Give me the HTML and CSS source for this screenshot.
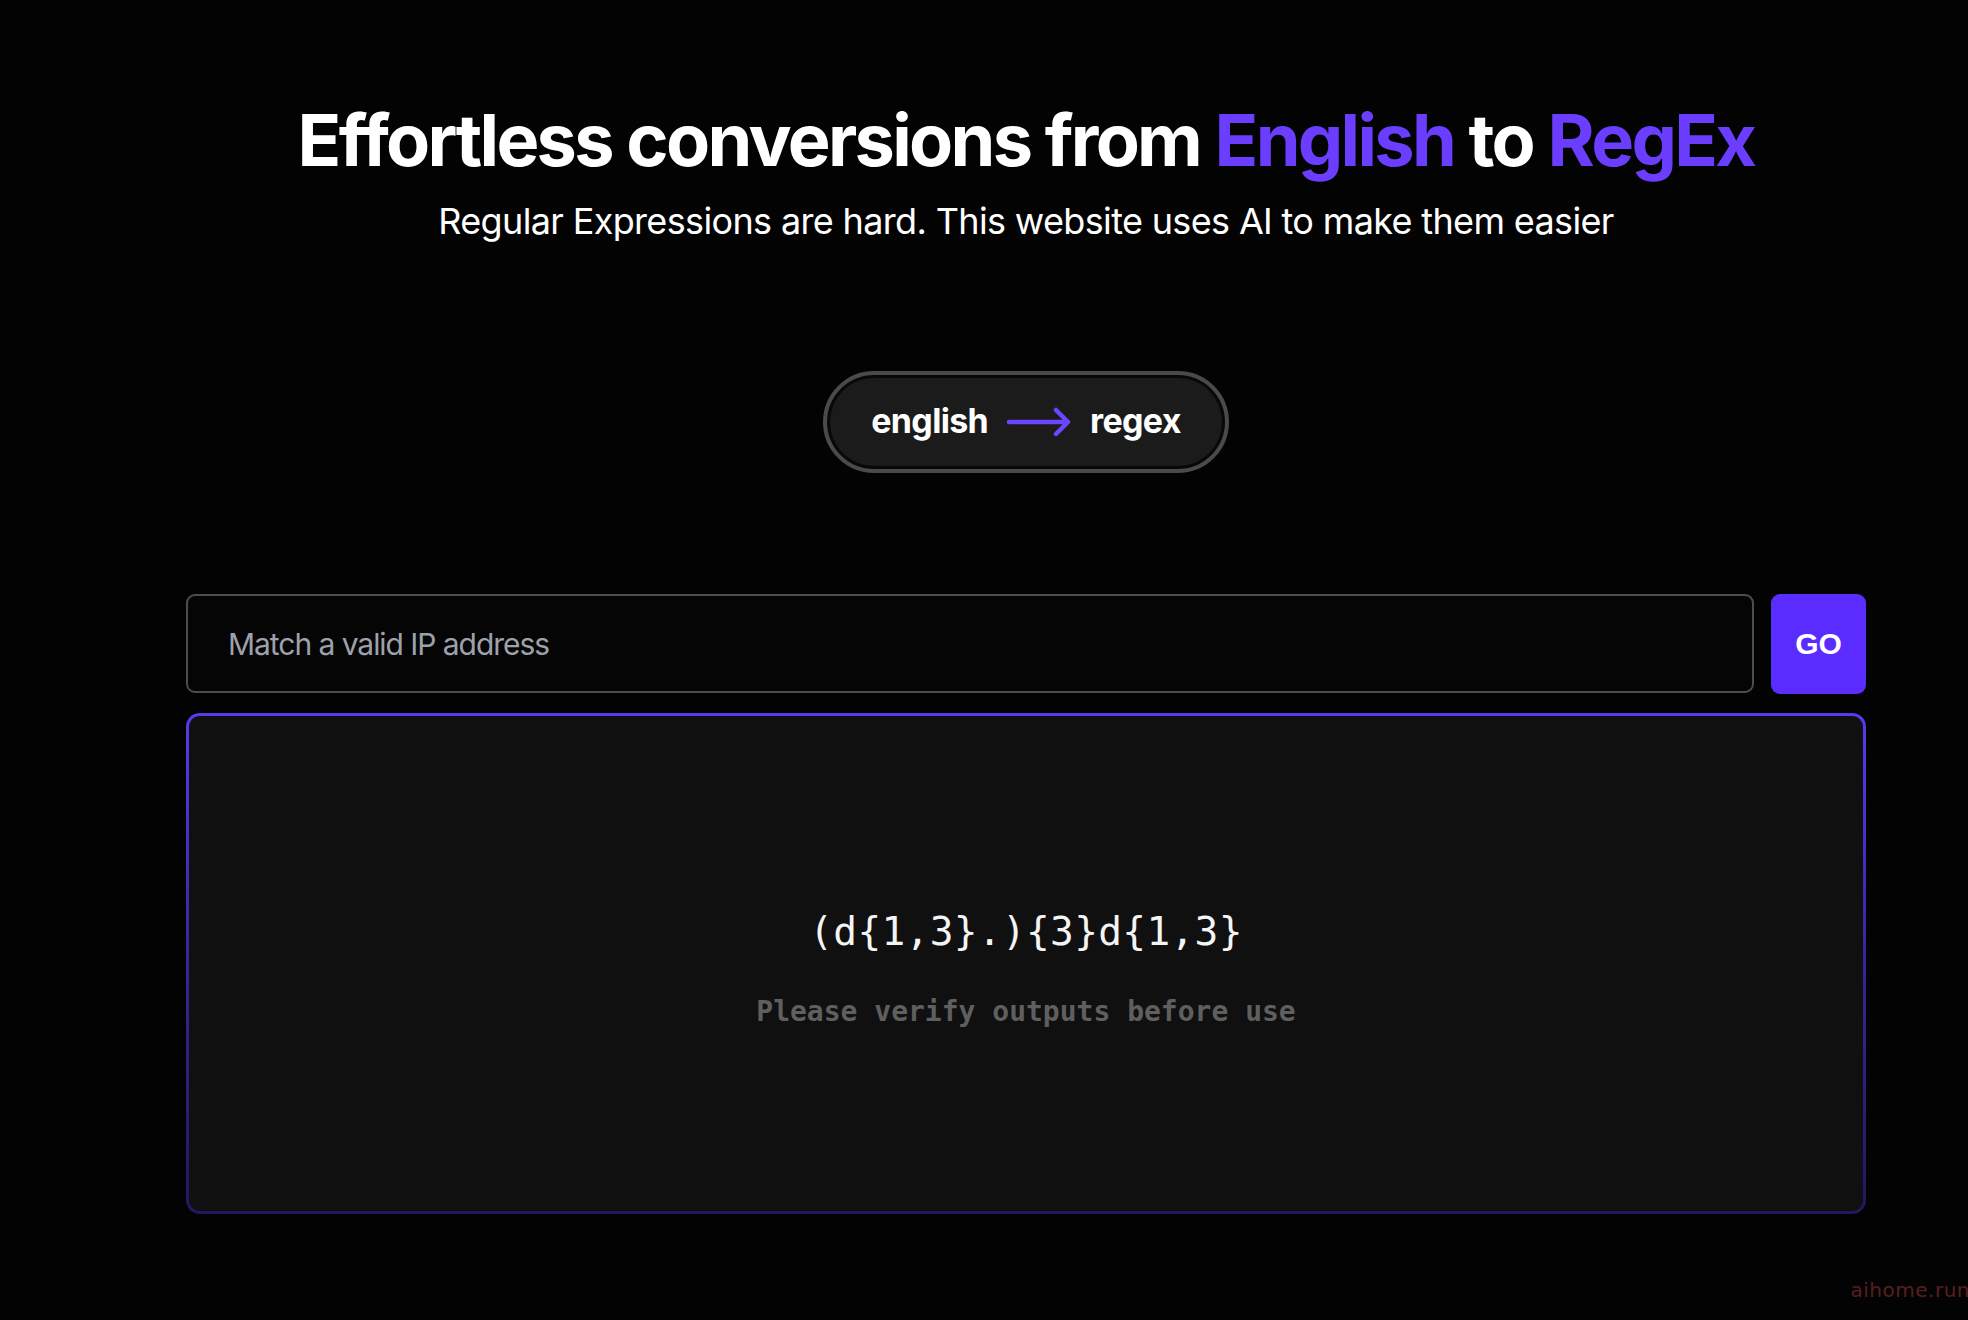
FILE: index.html
```html
<!DOCTYPE html>
<html lang="en">
<head>
<meta charset="utf-8">
<title>English to RegEx</title>
<link rel="stylesheet" href="styles.css">
</head>
<body>
<main class="page">
  <header class="hero">
    <h1 class="title">Effortless conversions from <span class="accent">English</span> to <span class="accent">RegEx</span></h1>
    <p class="subtitle">Regular Expressions are hard. This website uses AI to make them easier</p>
  </header>

  <div class="pill">
    <span class="pill-word">english</span>
    <svg class="pill-arrow" width="66" height="30" viewBox="0 0 66 30" aria-hidden="true">
      <path d="M3 15 H61 M50 3 L62 15 L50 27" fill="none" stroke="#6b45ff" stroke-width="4.5" stroke-linecap="round" stroke-linejoin="round"/>
    </svg>
    <span class="pill-word">regex</span>
  </div>

  <section class="tool">
    <form class="query">
      <input class="query-input" type="text" placeholder="Match a valid IP address">
      <button class="go" type="button">GO</button>
    </form>
    <div class="output">
      <div class="output-inner">
        <code class="regex">(d{1,3}.){3}d{1,3}</code>
        <p class="note">Please verify outputs before use</p>
      </div>
    </div>
  </section>
</main>
<div class="watermark">aihome.run</div>
</body>
</html>
```

FILE: styles.css
```css
* { box-sizing: border-box; }

html, body {
  margin: 0;
  padding: 0;
  background: #030303;
  overflow: hidden;
}

body {
  width: 1968px;
  height: 1320px;
  font-family: "Inter", "Noto Sans", sans-serif;
  color: #ffffff;
  position: relative;
}

.page {
  padding-left: 84px;
  display: flex;
  flex-direction: column;
  align-items: center;
}

.hero {
  display: flex;
  flex-direction: column;
  align-items: center;
  padding-top: 104px;
}

.title {
  margin: 0;
  font-size: 72px;
  line-height: 72px;
  font-weight: 700;
  letter-spacing: -0.037em;
  white-space: nowrap;
}

.accent { color: #6a3dff; }

.subtitle {
  margin: 22px 0 0;
  font-size: 36px;
  line-height: 46px;
  font-weight: 400;
  letter-spacing: -0.018em;
  white-space: nowrap;
}

.pill {
  margin-top: 127px;
  height: 102px;
  padding: 0 44px 0 44px;
  display: flex;
  align-items: center;
  gap: 18px;
  border-radius: 51px;
  background: #1b1b1b;
  border: 4px solid #4a4a4a;
  box-shadow: inset 0 0 0 3px #080808;
}

.pill-word {
  font-size: 34px;
  font-weight: 700;
  letter-spacing: -0.02em;
  line-height: 1;
  padding-bottom: 2px;
}

.pill-arrow { display: block; margin-bottom: 0; }

.tool {
  margin-top: 121px;
  width: 1680px;
  display: flex;
  flex-direction: column;
  gap: 19px;
}

.query {
  display: flex;
  gap: 17px;
  margin: 0;
}

.query-input {
  flex: 1;
  height: 99px;
  background: #050505;
  border: 2px solid #4d4d4d;
  border-radius: 9px;
  padding: 0 40px;
  font-family: "Inter", "Noto Sans", sans-serif;
  font-size: 30px;
  letter-spacing: -0.035em;
  color: #fff;
  outline: none;
}

.query-input::placeholder { color: #9ea1ab; }

.go {
  width: 95px;
  height: 100px;
  border: none;
  border-radius: 9px;
  background: #5b2cff;
  color: #fff;
  font-family: "Liberation Sans", Arial, sans-serif;
  font-weight: 700;
  font-size: 30px;
  padding: 0;
}

.output {
  height: 501px;
  border-radius: 14px;
  padding: 3px;
  background: linear-gradient(180deg, #5a39f0 0%, #3a2398 50%, #241660 100%);
}

.output-inner {
  height: 100%;
  border-radius: 11px;
  background: #101010;
  display: flex;
  flex-direction: column;
  align-items: center;
  justify-content: center;
  padding-top: 9px;
}

.regex {
  font-family: "DejaVu Sans Mono", "Liberation Mono", monospace;
  font-size: 39.5px;
  letter-spacing: 0.3px;
  color: #f4f4f4;
  line-height: 48px;
}

.note {
  margin: 39px 0 0;
  font-family: "DejaVu Sans Mono", "Liberation Mono", monospace;
  font-size: 28px;
  font-weight: 700;
  color: #5f5f5f;
  line-height: 36px;
}

.watermark {
  position: absolute;
  right: -2px;
  bottom: 18px;
  font-family: "DejaVu Sans", sans-serif;
  font-size: 20px;
  color: #5a1e1e;
  letter-spacing: 0.5px;
}
```
